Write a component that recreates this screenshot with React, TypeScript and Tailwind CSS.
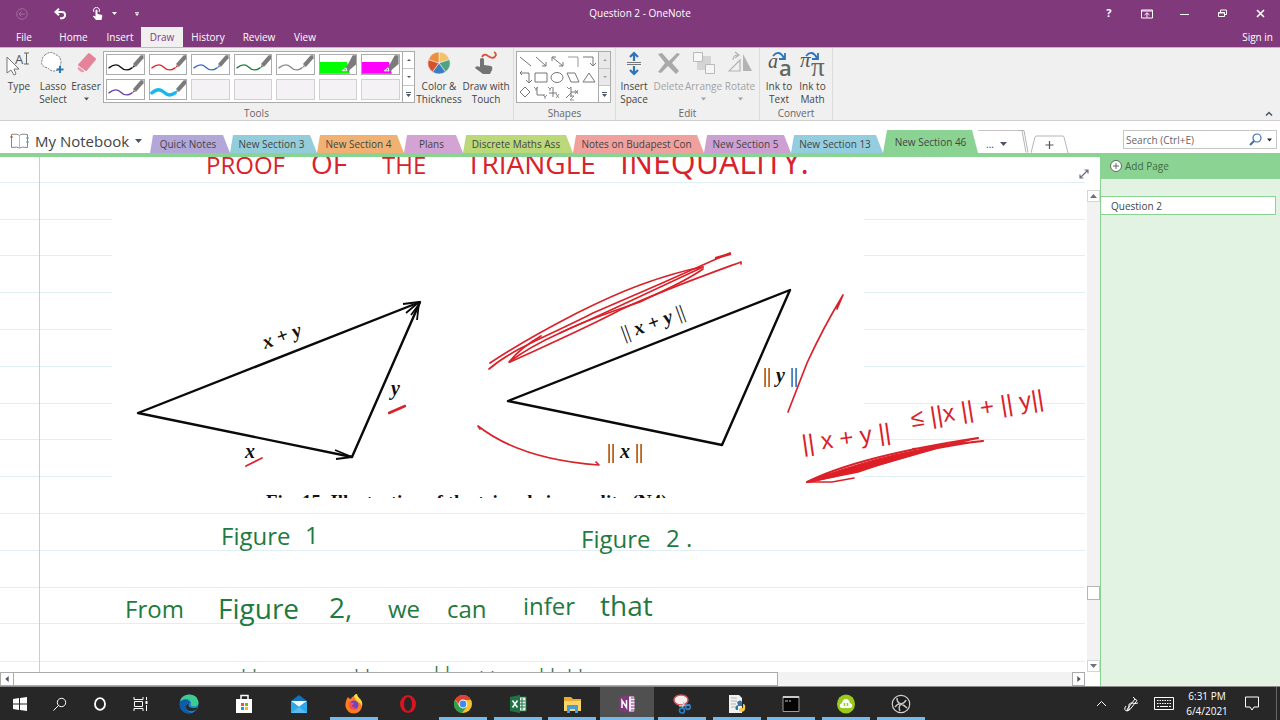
import { useState, type ReactNode } from "react";
import clsx from "clsx";

const SECTIONS = [
  { name: "Quick Notes", width: "w-[80px]", color: "bg-[#b3a7d9]" },
  { name: "New Section 3", width: "w-[87px]", color: "bg-[#93cddb]" },
  { name: "New Section 4", width: "w-[87px]", color: "bg-[#f0b173]" },
  { name: "Plans", width: "w-[59px]", color: "bg-[#d3a3d3]" },
  { name: "Discrete Maths Ass", width: "w-[110px]", color: "bg-[#bcd97a]" },
  { name: "Notes on Budapest Con", width: "w-[131px]", color: "bg-[#f0a09d]" },
  { name: "New Section 5", width: "w-[87px]", color: "bg-[#cda0d3]" },
  { name: "New Section 13", width: "w-[92px]", color: "bg-[#93cddf]" },
];

const PENS = [
  { label: "Black pen", color: "#111111", kind: "pen" },
  { label: "Red pen", color: "#dc2626", kind: "pen" },
  { label: "Blue pen", color: "#3b6fc0", kind: "pen" },
  { label: "Green pen", color: "#1f8240", kind: "pen" },
  { label: "Gray pen", color: "#8c8c8c", kind: "pen" },
  { label: "Green highlighter", color: "#00ff00", kind: "highlighter" },
  { label: "Magenta highlighter", color: "#ff00ff", kind: "highlighter" },
  { label: "Purple pen", color: "#6b3fa8", kind: "pen" },
  { label: "Cyan marker", color: "#18b9ea", kind: "marker" },
];

const RULES = [182, 219, 255, 292, 329, 366, 403, 439, 476, 513, 550, 587, 623, 661];

const INK_HEADING = [
  { x: 206, text: "PROOF", size: "text-[24px]" },
  { x: 311, text: "OF", size: "text-[28px]" },
  { x: 382, text: "THE", size: "text-[24px]" },
  { x: 466, text: "TRIANGLE", size: "text-[28px]" },
  { x: 620, text: "INEQUALITY.", size: "text-[32px]" },
];

const INK_GREEN = [
  { x: 221, y: 545, text: "Figure", size: "text-[24px]" },
  { x: 305, y: 544, text: "1", size: "text-[24px]" },
  { x: 581, y: 548, text: "Figure", size: "text-[24px]" },
  { x: 666, y: 547, text: "2 .", size: "text-[24px]" },
  { x: 125, y: 618, text: "From", size: "text-[24px]" },
  { x: 218, y: 619, text: "Figure", size: "text-[28px]" },
  { x: 329, y: 618, text: "2,", size: "text-[28px]" },
  { x: 388, y: 618, text: "we", size: "text-[24px]" },
  { x: 447, y: 618, text: "can", size: "text-[24px]" },
  { x: 523, y: 615, text: "infer", size: "text-[24px]" },
  { x: 600, y: 616, text: "that", size: "text-[28px]" },
];

const INK_NORMS = [
  { x: 238, y: 684 },
  { x: 351, y: 684 },
  { x: 431, y: 681 },
  { x: 476, y: 686 },
  { x: 536, y: 683 },
  { x: 564, y: 684 },
];

function Caret({ className = "text-gray-600" }: { className?: string }) {
  return (
    <svg width="7" height="4" viewBox="0 0 7 4" className={className} aria-hidden="true">
      <path d="M0 0h7L3.500 4z" fill="currentColor" />
    </svg>
  );
}

function CaptionButton({ label, children }: { label: string; children: ReactNode }) {
  return (
    <button aria-label={label} className="flex h-[27px] w-[38px] items-center justify-center">
      {children}
    </button>
  );
}

function TitleBar() {
  return (
    <div className="grid h-[27px] grid-cols-3 items-center text-white">
      <div className="flex items-center">
        <button aria-label="Back" className="ml-4 text-[#a26c9f]">
          <svg width="12" height="12" viewBox="0 0 12 12" fill="none" stroke="currentColor">
            <circle cx="6" cy="6" r="5.300" />
            <path d="M9 6H3.200M5.500 3.500 3 6l2.500 2.500" />
          </svg>
        </button>
        <button aria-label="Undo" className="ml-[26px]">
          <svg width="12" height="12" viewBox="0 0 12 12" fill="none" stroke="currentColor" strokeWidth="2">
            <path d="M5 .8 1.500 4 5 7.200M1.800 4H8a2.900 2.900 0 0 1 0 6.200H6" />
          </svg>
        </button>
        <button aria-label="Touch mode" className="ml-[26px] flex items-center gap-2">
          <svg width="12" height="14" viewBox="0 0 12 14">
            <path d="M2 5a3 3 0 1 1 5 0" fill="none" stroke="currentColor" />
            <path
              d="M3.500 3.500a1 1 0 0 1 2 0V7l4 .8q1 .3.800 1.400L9.500 13H4L.8 9.300q.8-1.300 2.700.2z"
              fill="currentColor"
            />
          </svg>
          <svg width="5" height="3" viewBox="0 0 5 3"><path d="M0 0h5L2.500 3z" fill="currentColor" /></svg>
        </button>
        <button aria-label="Customize toolbar" className="ml-[18px]">
          <svg width="4" height="4" viewBox="0 0 5 5"><path d="M0 0h5v1H0zM0 2h5L2.500 5z" fill="currentColor" /></svg>
        </button>
      </div>
      <h1 className="text-center text-[10px]">Question 2 - OneNote</h1>
      <div className="flex justify-end">
        <CaptionButton label="Help"><span className="text-[11px] font-bold">?</span></CaptionButton>
        <CaptionButton label="Ribbon display options">
          <svg width="12" height="10" viewBox="0 0 12 10" fill="none" stroke="currentColor">
            <path d="M.5 1h11v8H.5zM.5 2h11M6 8.500V4M3.500 6 6 3.800 8.500 6" />
          </svg>
        </CaptionButton>
        <CaptionButton label="Minimize">
          <svg width="9" height="9" viewBox="0 0 9 9"><path d="M0 5.500h9" stroke="currentColor" /></svg>
        </CaptionButton>
        <CaptionButton label="Restore">
          <svg width="9" height="9" viewBox="0 0 9 9" fill="none" stroke="currentColor">
            <path d="M.5 3.500h6v4h-6zM.5 4h6M2.500 3V1h6v4.500H7" />
          </svg>
        </CaptionButton>
        <CaptionButton label="Close">
          <svg width="9" height="9" viewBox="0 0 9 9"><path d="m1 1 7 7M8 1 1 8" stroke="currentColor" strokeWidth="1.600" /></svg>
        </CaptionButton>
      </div>
    </div>
  );
}

const MENU = [
  { name: "File", width: "w-[48px]" },
  { name: "Home", width: "w-[51px]" },
  { name: "Insert", width: "w-[42px]" },
  { name: "Draw", width: "w-[42px]" },
  { name: "History", width: "w-[50px]" },
  { name: "Review", width: "w-[52px]" },
  { name: "View", width: "w-[40px]" },
];

function MenuTabs() {
  const [active, setActive] = useState("Draw");
  return (
    <nav className="flex h-5 text-[10px] text-white">
      {MENU.map((item) => (
        <button
          key={item.name}
          onClick={() => setActive(item.name)}
          className={clsx(
            "text-center",
            item.width,
            active === item.name && "bg-[#f0f0f0] text-[#80397b]"
          )}
        >
          {item.name}
        </button>
      ))}
      <button className="mr-[7px] ml-auto">Sign in</button>
    </nav>
  );
}

interface RibbonButtonProps {
  icon: ReactNode;
  lines: string[];
  width: string;
  menu?: boolean;
  disabled?: boolean;
}

function RibbonButton({ icon, lines, width, menu, disabled }: RibbonButtonProps) {
  return (
    <button
      disabled={disabled}
      className={clsx(
        "flex shrink-0 flex-col items-center pt-[3px] text-[10px] leading-[13px] whitespace-nowrap",
        width,
        disabled ? "text-[#a3a3a3]" : "text-[#444444]"
      )}
    >
      <span className="flex h-[29px] items-start justify-center">{icon}</span>
      {lines.map((line) => (
        <span key={line}>{line}</span>
      ))}
      {menu && <Caret className={clsx("mt-1 w-[5px]", disabled ? "text-gray-400" : "text-gray-600")} />}
    </button>
  );
}

function RibbonGroup({ name, children }: { name: string; children: ReactNode }) {
  return (
    <div className="flex flex-col border-r border-[#dcdcdc]">
      <div className="flex h-[60px]">{children}</div>
      <div className="text-center text-[10px] leading-[13px] text-[#666666]">{name}</div>
    </div>
  );
}

function GalleryArrows({ dim }: { dim?: boolean }) {
  const tone = dim ? "bg-[#e9e9e9] text-gray-400" : "bg-white text-gray-600";
  return (
    <div className="flex w-3 flex-col divide-y divide-[#c6c6c6] border border-l-0 border-[#ababab]">
      <button aria-label="Scroll up" className={clsx("flex flex-1 items-center justify-center", tone)}>
        <svg width="4" height="2" viewBox="0 0 4 2"><path d="M0 2h4L2 0z" fill="currentColor" /></svg>
      </button>
      <button aria-label="Scroll down" className={clsx("flex flex-1 items-center justify-center", tone)}>
        <svg width="4" height="2" viewBox="0 0 4 2"><path d="M0 0h4L2 2z" fill="currentColor" /></svg>
      </button>
      <button aria-label="More" className="flex flex-1 items-center justify-center bg-white text-gray-600">
        <svg width="5" height="5" viewBox="0 0 5 5"><path d="M0 0h5v1H0zM0 2h5L2.500 5z" fill="currentColor" /></svg>
      </button>
    </div>
  );
}

function PenSwatch({ color, kind }: { color: string; kind: string }) {
  return (
    <svg viewBox="0 0 38 19" className="h-full w-full">
      {kind === "highlighter" && (
        <>
          <path d="M0 7h28l3 12H0z" fill={color} />
          <path d="M34 0h4v9l-7 6-3-4zM28 11l-6 6h8l1-2z" fill="#7b7b7b" />
          <path d="m23 16 4-3 1 3z" fill={color} stroke="#ffffff" />
        </>
      )}
      {kind !== "highlighter" && (
        <>
          <path
            d="M2 13c5-4 9-4 12-1 4 4 8 4 12 1"
            fill="none"
            stroke={color}
            strokeWidth={kind === "marker" ? 3.5 : 1.4}
            strokeLinecap="round"
          />
          <path d="m26 13 2-3 1 2z" fill={color} />
          <path d="M35 0h3v3l-8 9-3-3z" fill="#7b7b7b" />
        </>
      )}
    </svg>
  );
}

function ShapeGallery() {
  return (
    <div className="mt-[3px] ml-[2px] flex h-[52px]">
      <button aria-label="Shapes" className="w-[83px] border border-[#ababab] bg-white">
        <svg viewBox="0 0 80 48" width="80" height="48" fill="none" stroke="#777777">
          <path d="m3 4 11 9M19 4l10 9M29 9v4h-4M35 4l11 9M35 8V4h4M46 9v4h-4" />
          <path d="M51 4h10v10" stroke="#999999" />
          <path d="M66 4h10v9M73 10l3 3 3-3M5 18 3 20l2 2M3 20h9v10M9 27l3 3 3-3" stroke="#777777" />
          <path d="M18 20h12v9H18z" />
          <ellipse cx="40" cy="24.500" rx="6" ry="5" />
          <path d="M50 20h8l4 9h-8zM72 20l-6 9h12zM8 34l-5 5 5 5 5-5z" />
          <path d="M20 34v8h8M36 34v10M32 40h8M54 34v10M54 39h7M54 40l-5 5" />
          <path d="m17 34 2 2 2-2M19 36v2M26 42l2 2 2-2M28 44v2M31 34l2 2 2-2M33 36v2M39 41l3 4M42 41l-3 4M50 34l2 2 2-2M58 37l3 4M61 37l-3 4M53 43h4l-4 4h4" strokeWidth=".8" />
        </svg>
      </button>
      <GalleryArrows dim />
    </div>
  );
}

function Ribbon() {
  return (
    <div className="relative flex h-[74px] border-y border-t-[#d9a9d6] border-b-[#cfcfcf] bg-[#f0f0f0]">
      <RibbonGroup name="Tools">
        <RibbonButton
          width="ml-[2px] w-[34px]"
          lines={["Type"]}
          icon={
            <svg width="24" height="26" viewBox="0 0 24 26" className="overflow-visible">
              <path d="M0 6v16l4-3 3 5 2-1-2-5h5z" fill="#ffffff" stroke="#777777" />
              <text x="8" y="13" className="text-[13px]" fill="#555555">A</text>
              <path d="M17 2h5M19.500 2v11M17 13h5" stroke="#666666" />
            </svg>
          }
        />
        <RibbonButton
          width="w-[34px]"
          lines={["Lasso", "Select"]}
          icon={
            <svg width="24" height="24" viewBox="0 0 24 24">
              <path d="M4 4q6-5 11 0 4 0 5 7-1 9-7 9-4 0-6-3Q-1 15 1 10 1 6 4 4z" fill="#ffffff" stroke="#777777" strokeDasharray="2 1" />
              <path d="M19 15v7M15.500 18.500h7" stroke="#2e75b6" strokeWidth="2" />
            </svg>
          }
        />
        <RibbonButton
          width="w-[32px]"
          lines={["Eraser"]}
          menu
          icon={
            <svg width="24" height="24" viewBox="0 0 24 24">
              <path d="m15 3 6 5-9 11-7-5z" fill="#e5839a" stroke="#e5839a" strokeWidth="2" strokeLinejoin="round" />
              <path d="m4 15 7 5-2 2q-2 0-6-4z" fill="#eb9aab" stroke="#ffffff" strokeWidth=".7" />
            </svg>
          }
        />
        <div className="mt-[3px] ml-px flex h-[52px]">
          <div className="grid w-[300px] grid-cols-7 gap-1 border border-[#ababab] bg-white p-0.5">
            {Array.from({ length: 14 }, (_, i) => {
              const pen = PENS[i];
              return pen ? (
                <button key={pen.label} aria-label={pen.label} className="border border-[#ababab] bg-white">
                  <PenSwatch color={pen.color} kind={pen.kind} />
                </button>
              ) : (
                <span key={i} className="border border-[#d0d0d0] bg-[#f5f2f6]" />
              );
            })}
          </div>
          <GalleryArrows />
        </div>
        <RibbonButton
          width="w-[48px]"
          lines={["Color &", "Thickness"]}
          icon={
            <svg width="24" height="24" viewBox="0 0 24 24" stroke="#f0f0f0" strokeWidth=".6">
              <path d="M12 12V1a11 11 0 0 1 10.500 7.600z" fill="#f5c06a" />
              <path d="M12 12 22.500 8.600a11 11 0 0 1-4 12.300z" fill="#4fa383" />
              <path d="m12 12 6.500 8.900a11 11 0 0 1-13 0z" fill="#3a7ebf" />
              <path d="m12 12-6.500 8.900a11 11 0 0 1-4-12.300z" fill="#d8512f" />
              <path d="M12 12 1.500 8.600A11 11 0 0 1 12 1z" fill="#eb8f3c" />
            </svg>
          }
        />
        <RibbonButton
          width="mr-1 w-[46px]"
          lines={["Draw with", "Touch"]}
          icon={
            <svg width="24" height="24" viewBox="0 0 24 24">
              <path d="M8 6q2-4 6-1 6 4 8-1 0-2-2-3" fill="none" stroke="#d55336" strokeWidth="1.800" />
              <path d="M6 8q2-2 4 0v6l7 1q2 1 1 4l-2 4H9l-8-6q1-3 5-1z" fill="#737373" />
            </svg>
          }
        />
      </RibbonGroup>
      <RibbonGroup name="Shapes">
        <div className="pr-1">
          <ShapeGallery />
        </div>
      </RibbonGroup>
      <RibbonGroup name="Edit">
        <RibbonButton
          width="w-[36px]"
          lines={["Insert", "Space"]}
          icon={
            <svg width="18" height="26" viewBox="0 0 18 26" fill="none">
              <path d="M9 10V3M5 6l4-4 4 4M9 15v7M5 19l4 4 4-4" stroke="#2e75b6" strokeWidth="2.200" />
              <path d="M2 11.500h14M2 13.500h14" stroke="#777777" />
            </svg>
          }
        />
        <RibbonButton
          width="w-[33px]"
          lines={["Delete"]}
          disabled
          icon={
            <svg width="26" height="24" viewBox="0 0 26 24">
              <path d="m2 3 4-1 7 8 8-8 3 1-8 9 7 8-3 3-8-8-7 7-3-1 7-9z" fill="#a9a9a9" />
            </svg>
          }
        />
        <RibbonButton
          width="w-[37px]"
          lines={["Arrange"]}
          menu
          disabled
          icon={
            <svg width="24" height="24" viewBox="0 0 24 24">
              <path d="M5 5h14v14H5z" fill="#d4d4d4" />
              <path d="M1.500 1.500h9v9h-9zM13.500 13.500h9v9h-9z" fill="#f6f6f6" stroke="#b9b9b9" />
            </svg>
          }
        />
        <RibbonButton
          width="mr-px w-[36px]"
          lines={["Rotate"]}
          menu
          disabled
          icon={
            <svg width="25" height="24" viewBox="0 0 25 24">
              <path d="M1 20h11V9zM5 9q0-5 5-5M7 1l4 3-4 3" fill="none" stroke="#b3b3b3" strokeWidth="1.200" />
              <path d="M15 3v17h9z" fill="#b3b3b3" />
            </svg>
          }
        />
      </RibbonGroup>
      <RibbonGroup name="Convert">
        <RibbonButton
          width="ml-[2px] w-[34px]"
          lines={["Ink to", "Text"]}
          icon={
            <svg width="25" height="27" viewBox="0 0 25 27" className="overflow-visible">
              <text x="1" y="17" className="font-['Liberation_Serif',serif] text-[20px] italic" fill="#555555">a</text>
              <text x="12" y="25" className="text-[22px] font-semibold" fill="#666666">a</text>
              <path d="M6 5q6-7 11 2M18 2v6h-6" fill="none" stroke="#2e75b6" strokeWidth="1.800" />
            </svg>
          }
        />
        <RibbonButton
          width="mr-[3px] w-[33px]"
          lines={["Ink to", "Math"]}
          icon={
            <svg width="26" height="27" viewBox="0 0 26 27" className="overflow-visible">
              <text x="0" y="16" className="font-['Liberation_Serif',serif] text-[21px] italic" fill="#555555">π</text>
              <text x="11" y="25" className="font-['Liberation_Serif',serif] text-[27px]" fill="#666666">π</text>
              <path d="M6 5q6-7 11 2M18 2v6h-6" fill="none" stroke="#2e75b6" strokeWidth="1.800" />
            </svg>
          }
        />
      </RibbonGroup>
      <button aria-label="Collapse the ribbon" className="mr-[7px] mb-1 ml-auto self-end text-gray-600">
        <svg width="8" height="5" viewBox="0 0 8 5"><path d="m1 4.500 3-3 3 3" fill="none" stroke="currentColor" strokeWidth="1.500" /></svg>
      </button>
    </div>
  );
}

function SectionBar() {
  const [query, setQuery] = useState("");
  return (
    <div className="flex h-9 items-end border-b-4 border-[#8bd392] bg-white text-[10px] leading-4 text-[#444444]">
      <button className="flex w-[150px] shrink-0 items-center gap-[6px] self-center pt-2 pl-[10px] text-[15px] whitespace-nowrap">
        <svg width="19" height="16" viewBox="0 0 19 16" fill="none" stroke="#888888">
          <path d="M9.500 2.500Q8 .5 1.500 1.500v13q6-1 8 .5 2-1.500 8-.5v-13q-6.500-1-8 1z" />
          <path d="M9.500 3v12" stroke="#bbbbbb" />
          <path d="M1.500 3v2" stroke="#c85037" strokeWidth="2" />
          <path d="M17.500 4v2M17.500 8v2" stroke="#5aa18b" strokeWidth="2" />
        </svg>
        My Notebook
        <Caret />
      </button>
      {SECTIONS.map((section) => (
        <button
          key={section.name}
          className={clsx(
            "h-[18px] shrink-0 rounded-t pr-1 whitespace-nowrap [clip-path:polygon(3px_0,calc(100%-7px)_0,100%_100%,0_100%)]",
            section.width,
            section.color
          )}
        >
          {section.name}
        </button>
      ))}
      <button className="h-[23px] w-[95px] shrink-0 rounded-t bg-[#8bd392] whitespace-nowrap [clip-path:polygon(4px_0,calc(100%-6px)_0,100%_100%,0_100%)]">
        New Section 46
      </button>
      <button aria-label="More sections" className="flex h-[23px] shrink-0 items-center">
        <span className="flex h-full w-10 items-center gap-[6px] border-t border-[#c4c4c4] pt-1 pl-2">
          <span>...</span>
          <Caret />
        </span>
        <svg width="13" height="23" viewBox="0 0 13 23" fill="none" stroke="#b5b5b5">
          <path d="M0 .5h4l4 22M3 .5h3l4 22" />
        </svg>
      </button>
      <button aria-label="Create a new section" className="shrink-0">
        <svg width="38" height="18" viewBox="0 0 38 18" fill="none">
          <path d="m0 18 4-16q0-1 2-1h25q2 0 2 1l4 16" stroke="#b5b5b5" />
          <path d="M18.500 6v8M14.500 10h8" stroke="#555555" strokeWidth="1.200" />
        </svg>
      </button>
      <label className="mr-[3px] mb-1 ml-auto flex h-[19px] w-[154px] shrink-0 items-center border border-[#c6c6c6] bg-white pr-1 pl-[2px]">
        <span className="sr-only">Search</span>
        <input
          value={query}
          onChange={(e) => setQuery(e.target.value)}
          placeholder="Search (Ctrl+E)"
          className="min-w-0 flex-1 outline-none placeholder:text-[#666666]"
        />
        <svg width="14" height="13" viewBox="0 0 14 13" fill="none" stroke="#3a6fb0">
          <circle cx="8" cy="5" r="4" strokeWidth="1.200" />
          <path d="m5 8-4 4" strokeWidth="2" />
        </svg>
        <Caret className="ml-1 w-[5px] text-gray-800" />
      </label>
    </div>
  );
}

function Norm({ children }: { children: string }) {
  return (
    <>
      || <tspan className="font-bold italic">{children}</tspan> ||
    </>
  );
}

function PageCanvas() {
  return (
    <svg width="1087" height="515" viewBox="0 157 1087 515" className="block max-w-none" role="img" aria-label="Proof of the triangle inequality">
      <defs>
        <clipPath id="caption-clip">
          <rect x="260" y="490" width="430" height="8" />
        </clipPath>
      </defs>

      {RULES.map((y) => (
        <path key={y} d={`M0 ${y}.5H1085`} stroke="#e0eff4" />
      ))}
      <path d="M39.500 157v515" stroke="#f5bcbc" />
      <rect x="112" y="205" width="752" height="294" fill="#ffffff" />

      {/* printed figures */}
      <g fill="none" stroke="#0a0a0a" strokeWidth="2.400" strokeLinejoin="round">
        <path d="M420 302 138 413l214 44z" />
        <path d="m403 304 16-2-13 11M420 303l-9 12M419 303l-2 17M335 450l17 7-16 2" strokeWidth="1.800" />
        <path d="m508 401 282-111-68 155z" />
      </g>
      <g fill="#111111" className="font-['Liberation_Serif',serif] text-[20px]">
        <text x="265" y="349" transform="rotate(-20 265 349)" className="font-bold italic">x + y</text>
        <text x="391" y="395" className="font-bold italic">y</text>
        <text x="245" y="458" className="font-bold italic">x</text>
        <text x="624" y="340" transform="rotate(-20 624 340)"><Norm>x + y</Norm></text>
        <text x="763" y="382"><Norm>y</Norm></text>
        <text x="607" y="458"><Norm>x</Norm></text>
        <text x="266" y="508" clipPath="url(#caption-clip)" className="text-[19px] font-bold">
          Fig. 15. Illustration of the triangle inequality (N4)
        </text>
      </g>

      {/* red ink */}
      <g fill="none" stroke="#d9222a" strokeWidth="1.700" strokeLinecap="round" strokeLinejoin="round">
        <path d="m389 413 16-7" strokeWidth="2.500" />
        <path d="m246 466 16-8" />
        <path d="M490 363c24-16 54-33 87-50 24-12 44-21 63-28 22-8 40-14 63-18" />
        <path d="M489 369c26-22 66-36 104-56l67-29c25-11 47-21 70-31" />
        <path d="M703 269c-20 14-41 22-63 33-27 9-54 18-80 31-20 9-36 18-51 29 8-10 18-18 32-26" />
        <path d="M510 362c37-17 74-33 110-52 38-18 80-33 121-48v2" />
        <path d="M560 333c46-20 94-43 143-66" />
        <path d="m716 258 14-4" strokeWidth="2.500" />
        <path d="m480 429-2-3c28 22 67 35 121 39l-3-3" />
        <path d="m788 412 19-49q16-35 36-68l-6 14" />
        <path d="M807 482c40-20 105-34 171-44-50 10-100 30-170 44 50-18 90-28 165-40l10-1-70 8" strokeWidth="2.200" />
        <path d="M808 482q70-27 140-37-50 13-90 27z" fill="#e11d24" />
        <path d="m808 482 24 0 22-4" />
      </g>
      <g fill="#d9222a">
        {INK_HEADING.map((word) => (
          <text key={word.text} x={word.x} y="174" className={word.size}>
            {word.text}
          </text>
        ))}
        <g className="font-['Liberation_Sans',sans-serif] text-[24px]">
          <text x="803" y="452" transform="rotate(-8 803 452)">|| x + y ||</text>
          <text x="912" y="427" transform="rotate(-9 912 427)">≤ ||x || + || y||</text>
        </g>
      </g>

      {/* green ink */}
      <g fill="#1f7a3f">
        {INK_GREEN.map((word) => (
          <text key={`${word.x}-${word.y}`} x={word.x} y={word.y} className={word.size}>
            {word.text}
          </text>
        ))}
        {INK_NORMS.map((norm) => (
          <text key={norm.x} x={norm.x} y={norm.y} className="text-[20px]">
            ||
          </text>
        ))}
      </g>
    </svg>
  );
}

function Workspace() {
  return (
    <main className="flex min-w-0 flex-1 flex-col bg-white">
      <div className="flex min-h-0 flex-1">
        <div className="min-w-0 flex-1 overflow-hidden">
          <PageCanvas />
        </div>
        <div className="flex w-[13px] shrink-0 flex-col">
          <button aria-label="Full page view" className="-ml-2 flex h-[33px] w-3 items-center text-gray-500">
            <svg width="10" height="10" viewBox="0 0 10 10" fill="none" stroke="currentColor" strokeWidth="1.200">
              <path d="m1 9 8-8M5.500 1H9v3.500M1 5.500V9h3.500" />
            </svg>
          </button>
          <button aria-label="Scroll up" className="flex h-3 items-center justify-center border border-[#d5d5d5]">
            <Caret className="rotate-180 text-gray-500" />
          </button>
          <div className="flex flex-1 flex-col bg-[#f2f2f2]">
            <div className="grow-[382]" />
            <div className="h-[14px] border border-[#b5b5b5] bg-white" />
            <div className="grow-[60]" />
          </div>
          <button aria-label="Scroll down" className="flex h-3 items-center justify-center border border-[#d5d5d5]">
            <Caret className="text-gray-500" />
          </button>
        </div>
      </div>
      <div className="mr-[15px] flex h-[14px] shrink-0 bg-[#f2f2f2]">
        <button aria-label="Scroll left" className="flex w-[14px] items-center justify-center border border-[#ababab] bg-white">
          <Caret className="w-[6px] rotate-90 text-gray-600" />
        </button>
        <div className="grow-[764] border border-l-0 border-[#ababab] bg-white" />
        <div className="grow-[294]" />
        <button aria-label="Scroll right" className="flex w-[13px] items-center justify-center border border-[#ababab] bg-white">
          <Caret className="w-[6px] -rotate-90 text-gray-600" />
        </button>
      </div>
    </main>
  );
}

function PageList() {
  return (
    <aside className="w-[180px] shrink-0 border-l border-[#8bd392] bg-[#e2f3e4] text-[10px] leading-4 text-[#444444]">
      <button className="flex h-[22px] w-full items-center gap-[3px] bg-[#8bd392] pb-1 pl-[9px] text-[#3f6b45]">
        <svg width="12" height="12" viewBox="0 0 12 12" fill="none" stroke="#5c6b5e">
          <circle cx="6" cy="6" r="5.500" fill="#ffffff" />
          <path d="M6 3v6M3 6h6" />
        </svg>
        Add Page
      </button>
      <a href="#question-2" className="mt-[17px] mr-1 flex h-[19px] items-center border border-l-0 border-[#8bd392] bg-white pl-[10px]">
        Question 2
      </a>
    </aside>
  );
}

interface TaskbarApp {
  name: string;
  running?: boolean;
  active?: boolean;
  icon: ReactNode;
}

const APPS: TaskbarApp[] = [
  {
    name: "Edge",
    icon: (
      <>
        <circle cx="10" cy="10" r="9.500" fill="#1682c9" />
        <path d="M1 8Q2 1 10 .5q8 0 9.500 7 .5 5-4.500 5-4 0-3-3Q11 5 7 5 3 5 1 8z" fill="#3dcb91" />
        <path d="M1 8q3-3 7-2 3 1 4 3-4-1-5 2-1 5 5 8Q0 20 1 8z" fill="#0f5ba5" />
        <path d="M10 9q-3 6 7 5l2-1-2 3q-9 3-10-3 0-3 3-4z" fill="#272727" />
      </>
    ),
  },
  {
    name: "Store",
    icon: (
      <>
        <path d="M7 6V1.500h7V6" fill="none" stroke="#ffffff" strokeWidth="1.500" />
        <path d="M2 5h16v14H2z" fill="#ffffff" />
        <path d="M7 9h3v3H7z" fill="#f25022" />
        <path d="M11 9h3v3h-3z" fill="#7fba00" />
        <path d="M7 13h3v3H7z" fill="#00a4ef" />
        <path d="M11 13h3v3h-3z" fill="#ffb900" />
      </>
    ),
  },
  {
    name: "Mail",
    icon: (
      <>
        <path d="m2 7 8-6 8 6v12H2z" fill="#1171b9" />
        <path d="M2 7h16l-8 6z" fill="#f3f8fc" />
        <path d="m2 7 8 6 8-6v12H2z" fill="#2fa8e8" />
        <path d="m2 19 8-6 8 6z" fill="#55bdf0" />
      </>
    ),
  },
  {
    name: "Firefox",
    running: true,
    icon: (
      <>
        <path d="M10 2q1-2 3-2 0 2 2 4 4 3 3 9-2 6-8 6.500-7-.500-8.500-7Q1 7 4 3q1 2 3 2 0-2 3-3z" fill="#ff7b23" />
        <path d="M10 2q1-2 3-2 0 2 2 4 4 3 3 8-1-3-4-4-3-2-4-6z" fill="#ffd83d" />
        <circle cx="10" cy="11" r="4.500" fill="#7144c4" />
        <path d="M5 8q3 1 5 1 0 2-2 2 0 3 5 3-7 4-8-6z" fill="#ff4b55" />
      </>
    ),
  },
  {
    name: "Opera",
    icon: (
      <>
        <ellipse cx="10" cy="10" rx="8" ry="9" fill="#d9141e" />
        <ellipse cx="10" cy="10" rx="4" ry="7" fill="#272727" />
      </>
    ),
  },
  {
    name: "Chrome",
    running: true,
    icon: (
      <>
        <circle cx="10" cy="10" r="9" fill="#f7c22b" />
        <path d="M2 5.700A9 9 0 0 1 18 6H10l-4 4z" fill="#dd4434" />
        <path d="M2 5.700A9 9 0 0 0 9 19l4.500-6H7z" fill="#2da050" />
        <circle cx="10" cy="10" r="4.400" fill="#ffffff" />
        <circle cx="10" cy="10" r="3.400" fill="#4a87ee" />
      </>
    ),
  },
  {
    name: "Excel",
    running: true,
    icon: (
      <>
        <path d="M11 3h7v14h-7" fill="#e8f2eb" stroke="#1f7246" />
        <path d="M14 4v12M12 7h5M12 10h5M12 13h5" stroke="#1f7246" />
        <path d="M2 3 12 1v18L2 17z" fill="#1f7246" />
        <path d="m4.500 6.500 5 7M9.500 6.500l-5 7" stroke="#ffffff" strokeWidth="1.500" />
      </>
    ),
  },
  {
    name: "File Explorer",
    running: true,
    icon: (
      <>
        <path d="M2 3h7l2 2h8v12H2z" fill="#e8ac30" />
        <path d="M2 7h17v10H2z" fill="#fbd568" />
        <path d="M5 11h11v8h-3v-4H8v4H5z" fill="#4b9bd7" />
      </>
    ),
  },
  {
    name: "OneNote",
    running: true,
    active: true,
    icon: (
      <>
        <path d="M11 3h6v14h-6" fill="#f4e9f4" stroke="#ffffff" />
        <path d="M14 4h4M14 7h4M14 10h4M14 13h4M14 16h4" stroke="#80397b" strokeWidth="1.200" />
        <path d="M2 3 12 1v18L2 17z" fill="#80397b" />
        <path d="M5 14V6.500l4.500 7V6" fill="none" stroke="#ffffff" strokeWidth="1.500" />
      </>
    ),
  },
  {
    name: "Snipping Tool",
    running: true,
    icon: (
      <>
        <ellipse cx="9" cy="6" rx="7" ry="5" fill="#f6eeee" stroke="#d3555a" strokeWidth="1.500" />
        <path d="m12 8-2 7M7 12l11-1" stroke="#c8c8c8" strokeWidth="1.500" />
        <circle cx="10" cy="16.500" r="2.500" fill="none" stroke="#2a7fc7" strokeWidth="1.700" />
        <circle cx="16" cy="13" r="2.300" fill="none" stroke="#2a7fc7" strokeWidth="1.700" />
      </>
    ),
  },
  {
    name: "Python",
    running: true,
    icon: (
      <>
        <path d="M2 1h10l3 3v15H2z" fill="#f1f1f1" />
        <path d="M4 4h6M4 7h6M4 10h5M4 13h4" stroke="#b5b5b5" />
        <path d="M10 8q4-3 5 0v4h-4v4H9q-2-4 2-5z" fill="#3473a7" />
        <path d="M16 10q3 0 2 5 0 3-5 3-2-2 0-4h3z" fill="#fbd040" />
      </>
    ),
  },
  {
    name: "Command Prompt",
    running: true,
    icon: (
      <>
        <path d="M2 2.500h16v15H2z" fill="#050505" stroke="#9c9c9c" />
        <path d="M2 3h16" stroke="#c9c9c9" strokeWidth="2" />
        <path d="M4 7h3M8 7h2" stroke="#cccccc" />
      </>
    ),
  },
  {
    name: "Camtasia",
    running: true,
    icon: (
      <>
        <ellipse cx="10" cy="10" rx="9" ry="9.500" fill="#9acb1c" />
        <path d="M5 14q-3-3 1-5 1-4 4-4t4 4q4 2 1 5z" fill="#ffffff" />
        <path d="M8.500 9v3M11.500 9v3" stroke="#9acb1c" strokeWidth="1.500" />
      </>
    ),
  },
  {
    name: "OBS Studio",
    running: true,
    icon: (
      <>
        <circle cx="10" cy="10" r="8.700" fill="#1c1c1c" stroke="#d2d2d2" strokeWidth="1.200" />
        <path d="M6 4q0 5 4 6 4-1 5-4M10 10q-3 3-1 7M10 10q3 1 6 4M10 10q-3-1-6 3" fill="none" stroke="#c4c4c4" strokeWidth="1.500" />
      </>
    ),
  },
];

function Taskbar() {
  return (
    <footer className="flex h-[34px] shrink-0 items-stretch border-t border-[#8a8a8a] bg-[#272727] text-white">
      <button aria-label="Start" className="flex w-10 items-center justify-center">
        <svg width="14" height="14" viewBox="0 0 14 14" fill="#ffffff">
          <path d="m0 2 6-1v5.500H0zM7 1l7-1v6.500H7zM0 7.500h6V13l-6-1zM7 7.500h7V14l-7-1z" />
        </svg>
      </button>
      <button aria-label="Search" className="flex w-10 items-center justify-center">
        <svg width="14" height="14" viewBox="0 0 14 14" fill="none" stroke="#ffffff">
          <circle cx="8.500" cy="5.500" r="4.200" />
          <path d="m5.500 8.500-5 5" />
        </svg>
      </button>
      <button aria-label="Cortana" className="flex w-10 items-center justify-center">
        <svg width="14" height="14" viewBox="0 0 14 14"><ellipse cx="7" cy="7" rx="5" ry="5.800" fill="none" stroke="#ffffff" strokeWidth="1.800" /></svg>
      </button>
      <button aria-label="Task view" className="flex w-10 items-center justify-center">
        <svg width="15" height="14" viewBox="0 0 15 14" fill="none" stroke="#ffffff">
          <path d="M1 0v2.500h9V0M1 14v-2.500h9V14M1.500 4.500h8v5h-8zM13.500 0v3M13.500 8v6" />
          <path d="M13.500 4v3" strokeWidth="2" />
        </svg>
      </button>
      <div className="ml-0.5 flex w-[766px]">
        {APPS.map((app) => (
          <button
            key={app.name}
            aria-label={app.name}
            className={clsx("flex flex-1 flex-col items-center", app.active && "bg-[#505050]")}
          >
            <span className="flex flex-1 items-center pt-[3px]">
              <svg width="20" height="20" viewBox="0 0 20 20">{app.icon}</svg>
            </span>
            <span
              className={clsx(
                "h-[3px]",
                app.active ? "w-full" : "w-12",
                app.running ? "bg-[#76b9ed]" : "bg-transparent"
              )}
            />
          </button>
        ))}
      </div>
      <div className="ml-auto flex items-center">
        <button aria-label="Show hidden icons" className="flex w-[30px] justify-center">
          <svg width="11" height="7" viewBox="0 0 11 7"><path d="m1 6 4.500-4.500L10 6" fill="none" stroke="#ffffff" /></svg>
        </button>
        <button aria-label="Windows Ink" className="flex w-[30px] justify-center">
          <svg width="15" height="16" viewBox="0 0 15 16" fill="none" stroke="#ffffff">
            <path d="m4 12 7-9 2 1.500-7 9-3 1zM2 10q-3 4 1 5 3 0 2-4-1-4 3-4 3 1 6 0M9 1l2 2" />
          </svg>
        </button>
        <button aria-label="Touch keyboard" className="flex w-9 justify-center">
          <svg width="20" height="13" viewBox="0 0 20 13" fill="none" stroke="#ffffff">
            <path d="M.5.5h19v12H.5z" />
            <path d="M3 3.500h14M3 6.500h14" strokeDasharray="1.500 1" />
            <path d="M3 9.500h2M6 9.500h8M15 9.500h2" />
          </svg>
        </button>
        <button className="w-[50px] text-center text-[10px] leading-[15px]">
          <span className="block">6:31 PM</span>
          <span className="block">6/4/2021</span>
        </button>
        <button aria-label="Notifications" className="mr-1 flex w-10 justify-center">
          <svg width="14" height="15" viewBox="0 0 14 15"><path d="M.5 1h13v10H9l-2 3-2-3H.5z" fill="none" stroke="#ffffff" /></svg>
        </button>
        <button aria-label="Show desktop" className="h-[33px] w-1 border-l border-[#666666]" />
      </div>
    </footer>
  );
}

export default function App() {
  return (
    <div className="flex h-screen min-h-[480px] flex-col overflow-hidden bg-white font-['Open_Sans','Noto_Sans',sans-serif]">
      <header className="shrink-0">
        <div className="bg-[#80397b]">
          <TitleBar />
          <MenuTabs />
        </div>
        <Ribbon />
        <SectionBar />
      </header>
      <div className="flex min-h-0 flex-1">
        <Workspace />
        <PageList />
      </div>
      <Taskbar />
    </div>
  );
}
